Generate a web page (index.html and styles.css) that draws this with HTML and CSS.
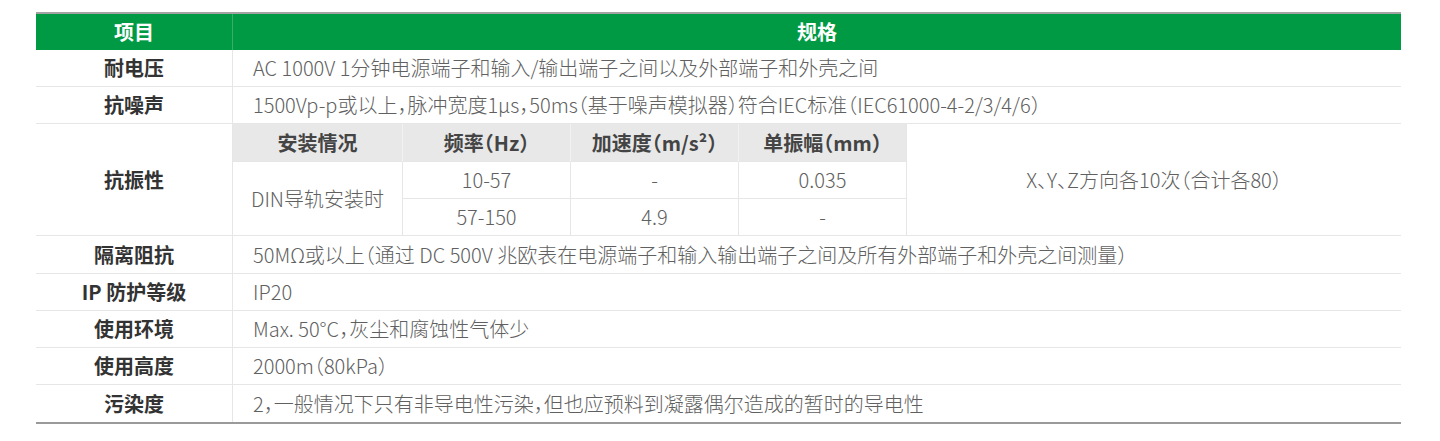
FILE: index.html
```html
<!DOCTYPE html>
<html lang="zh-CN">
<head>
<meta charset="utf-8">
<title>规格</title>
<link rel="stylesheet" href="styles.css">
</head>
<body>
<div class="wrap">
<table class="spec">
  <thead>
    <tr><th class="lab">项目</th><th>规格</th></tr>
  </thead>
  <tbody>
    <tr><td class="lab">耐电压</td><td class="val">AC 1000V 1分钟电源端子和输入/输出端子之间以及外部端子和外壳之间</td></tr>
    <tr><td class="lab">抗噪声</td><td class="val">1500Vp-p或以上，脉冲宽度1μs，50ms（基于噪声模拟器）符合IEC标准（IEC61000-4-2/3/4/6）</td></tr>
    <tr class="vib">
      <td class="lab">抗振性</td>
      <td class="nest">
        <table class="sub">
          <tr class="subhead">
            <th class="c1">安装情况</th>
            <th class="c2">频率（Hz）</th>
            <th class="c3">加速度（m/s²）</th>
            <th class="c4">单振幅（mm）</th>
            <td class="c5" rowspan="3">X、Y、Z方向各10次（合计各80）</td>
          </tr>
          <tr>
            <td rowspan="2">DIN导轨安装时</td>
            <td>10-57</td>
            <td>-</td>
            <td>0.035</td>
          </tr>
          <tr>
            <td>57-150</td>
            <td>4.9</td>
            <td>-</td>
          </tr>
        </table>
      </td>
    </tr>
    <tr class="tall"><td class="lab">隔离阻抗</td><td class="val">50MΩ或以上（通过 DC 500V 兆欧表在电源端子和输入输出端子之间及所有外部端子和外壳之间测量）</td></tr>
    <tr><td class="lab">IP 防护等级</td><td class="val">IP20</td></tr>
    <tr><td class="lab">使用环境</td><td class="val">Max. 50°C，灰尘和腐蚀性气体少</td></tr>
    <tr><td class="lab">使用高度</td><td class="val">2000m（80kPa）</td></tr>
    <tr class="last"><td class="lab">污染度</td><td class="val">2，一般情况下只有非导电性污染，但也应预料到凝露偶尔造成的暂时的导电性</td></tr>
  </tbody>
</table>
</div>
</body>
</html>
```
FILE: styles.css
```css
html, body {
  margin: 0;
  padding: 0;
  background: #fff;
}
body {
  font-family: "Noto Sans CJK SC", "Noto Sans", sans-serif;
  font-size: 20px;
  font-feature-settings: "halt";
  color: #555;
}
.wrap {
  padding: 12px 39px 0 36px;
}
.spec {
  width: 1365px;
  border-collapse: collapse;
  table-layout: fixed;
}
.spec > thead th {
  background: #009a44;
  color: #fff;
  font-weight: 700;
  height: 36px;
  padding: 0;
  border-top: 2px solid #a3a3a3;
  text-align: center;
  line-height: 22px;
}
.spec > thead th.lab {
  width: 196px;
  border-right: 1px solid #35b06a;
}
.spec > tbody > tr > td {
  height: 36px;
  padding: 0;
  border-bottom: 1px solid #e6e6e6;
  line-height: 22px;
}
.spec > tbody > tr.tall > td {
  height: 37px;
}
.spec > tbody > tr.last > td {
  height: 37px;
  border-bottom: 2px solid #9a9a9a;
}
.spec td.lab {
  width: 196px;
  text-align: center;
  font-weight: 700;
  color: #333;
  border-right: 1px solid #e6e6e6;
}
.spec td.val {
  padding-left: 20px;
  font-weight: 300;
  color: #606060;
  white-space: nowrap;
}
.spec td.nest {
  padding: 0;
  height: auto;
}
.sub {
  width: 100%;
  border-collapse: collapse;
  table-layout: fixed;
}
.sub th, .sub td {
  height: 36px;
  padding: 0;
  text-align: center;
  line-height: 22px;
  white-space: nowrap;
}
.sub tr.subhead th {
  height: 37px;
}
.sub td {
  font-weight: 300;
  color: #606060;
}
.sub tr + tr td {
  border-top: 1px solid #e6e6e6;
}
.sub tr td + td {
  border-left: 1px solid #e6e6e6;
}
.sub tr:nth-child(2) td:first-child {
  border-right: 1px solid #e6e6e6;
}
.sub th {
  background: #e8e8e8;
  color: #444;
  font-weight: 700;
  border-right: 1px solid #f2f2f2;
}
.sub th.c4 {
  border-right: 1px solid #e6e6e6;
}
.sub .c1 { width: 169px; }
.sub .c2 { width: 167px; }
.sub .c3 { width: 167px; }
.sub .c4 { width: 167px; }
.sub td.c5 {
  border-left: 1px solid #e6e6e6;
  border-top: none;
}
```
